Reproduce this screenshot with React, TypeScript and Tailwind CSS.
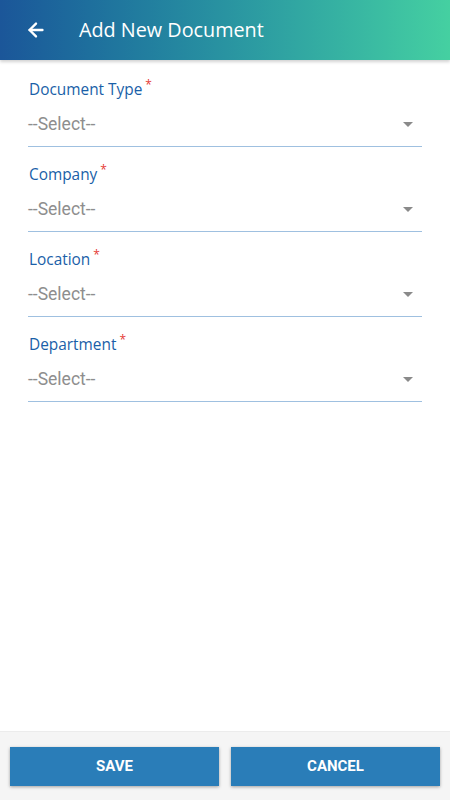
import { ArrowLeft } from 'lucide-react'

const fields = ['Document Type', 'Company', 'Location', 'Department']

export default function App() {
  return (
    <div className="flex h-screen flex-col bg-white font-['Open_Sans',sans-serif]">
      <header className="relative z-10 flex h-[60px] shrink-0 items-center bg-gradient-to-r from-[#1b5699] to-[#45d0a1] shadow-[0_2px_3px_rgba(0,0,0,0.18)]">
        <button className="ml-[24px] flex h-[24px] w-[24px] items-center justify-center text-white">
          <ArrowLeft size={22} strokeWidth={2.6} />
        </button>
        <h1 className="ml-[31px] text-[19.8px] leading-none text-white">Add New Document</h1>
      </header>

      <main className="flex flex-1 flex-col gap-[18px] px-[28px] pt-[20px]">
        {fields.map((label) => (
          <div key={label}>
            <div className="h-[20px] pl-px text-[15.4px] leading-[20px] text-[#1a5fa8]">
              {label}
              <span className="relative -top-[6px] ml-[3px] text-[12px] text-[#e53935]">*</span>
            </div>
            <div className="flex items-center justify-between border-b border-[#9fc0e0] pb-[10px] pt-[12px]">
              <span className="font-['Roboto',sans-serif] text-[17.5px] leading-[24px] text-[#8e8e8e]">
                --Select--
              </span>
              <span className="mr-[9px] h-0 w-0 border-x-[5.5px] border-t-[5.5px] border-x-transparent border-t-[#8a8a8a]" />
            </div>
          </div>
        ))}
      </main>

      <footer className="flex h-[69px] shrink-0 gap-[12px] border-t border-[#ececec] bg-[#f5f5f5] px-[10px] pt-[15px]">
        {['SAVE', 'CANCEL'].map((t) => (
          <button
            key={t}
            className="h-[39px] flex-1 bg-[#2a7db8] font-['Roboto',sans-serif] text-[15px] font-bold text-white shadow-[0_1px_3px_rgba(0,0,0,0.35)]"
          >
            {t}
          </button>
        ))}
      </footer>
    </div>
  )
}
